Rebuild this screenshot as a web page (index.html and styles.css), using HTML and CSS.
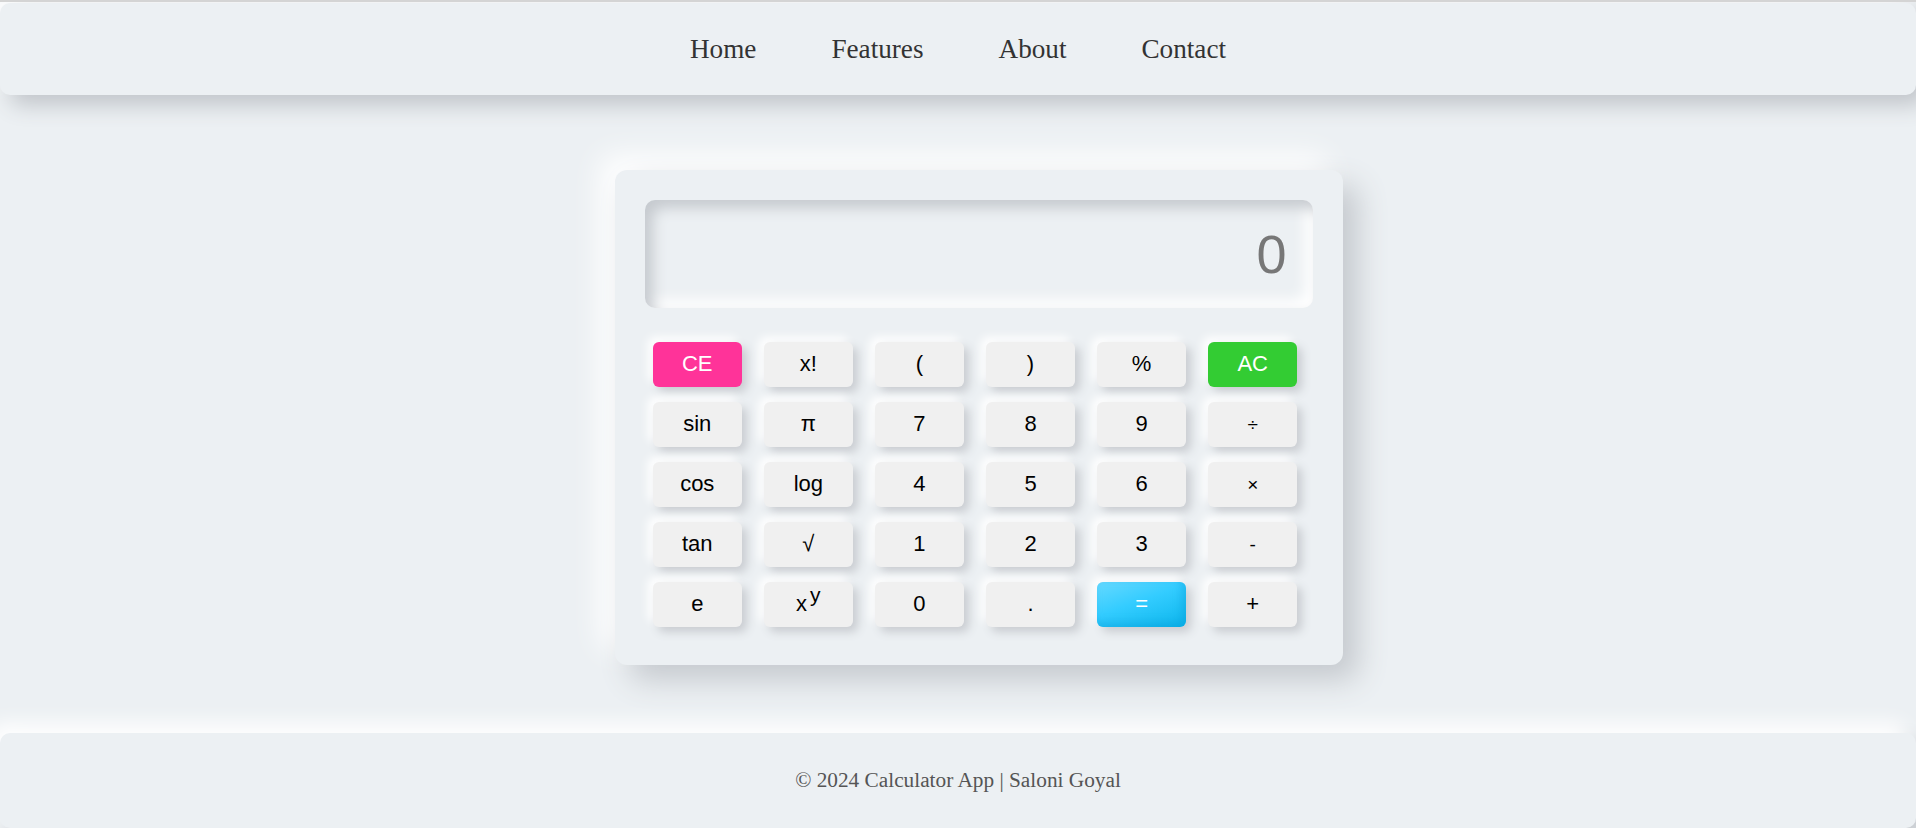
FILE: index.html
```html
<!DOCTYPE html>
<html lang="en">
<head>
<meta charset="utf-8">
<title>Calculator App</title>
<link rel="stylesheet" href="styles.css">
</head>
<body>
<header class="site-header">
  <nav class="nav">
    <a class="nav-link" href="#">Home</a>
    <a class="nav-link" href="#">Features</a>
    <a class="nav-link" href="#">About</a>
    <a class="nav-link" href="#">Contact</a>
  </nav>
</header>
<main class="main">
  <div class="calculator">
    <div class="display">0</div>
    <div class="keys">
      <button class="key key-ce">CE</button>
      <button class="key">x!</button>
      <button class="key">(</button>
      <button class="key">)</button>
      <button class="key">%</button>
      <button class="key key-ac">AC</button>

      <button class="key">sin</button>
      <button class="key">π</button>
      <button class="key">7</button>
      <button class="key">8</button>
      <button class="key">9</button>
      <button class="key key-op">÷</button>

      <button class="key">cos</button>
      <button class="key">log</button>
      <button class="key">4</button>
      <button class="key">5</button>
      <button class="key">6</button>
      <button class="key key-op">×</button>

      <button class="key">tan</button>
      <button class="key">√</button>
      <button class="key">1</button>
      <button class="key">2</button>
      <button class="key">3</button>
      <button class="key key-op">-</button>

      <button class="key">e</button>
      <button class="key">x<sup class="sup">y</sup></button>
      <button class="key">0</button>
      <button class="key">.</button>
      <button class="key key-eq">=</button>
      <button class="key">+</button>
    </div>
  </div>
</main>
<footer class="site-footer">
  <p class="footer-text">© 2024 Calculator App | Saloni Goyal</p>
</footer>
</body>
</html>
```

FILE: styles.css
```css
* {
  box-sizing: border-box;
}

html {
  background: #ecf0f3;
}

body {
  margin: 0;
  background: #ecf0f3;
  border-top: 2px solid #d4d4d4;
  padding-top: 1px;
  font-family: "Liberation Serif", "Times New Roman", serif;
  overflow: hidden;
}

.site-header {
  height: 92px;
  background: #ecf0f3;
  border-radius: 10px;
  box-shadow: 10px 10px 22px #c0c4c9, -10px -10px 20px #ffffff;
  display: flex;
  align-items: center;
  justify-content: center;
  position: relative;
  z-index: 2;
}

.nav {
  display: flex;
  gap: 75px;
}

.nav-link {
  font-size: 27.2px;
  color: #333;
  text-decoration: none;
}

.main {
  display: flex;
  justify-content: center;
  padding: 75px 0 68px 41px;
}

.calculator {
  width: 728px;
  padding: 30px 30px 38px 30px;
  background: #ecf0f3;
  border-radius: 12px;
  box-shadow: 15px 15px 30px #c5c9ce, -15px -15px 30px #ffffff;
}

.display {
  height: 108px;
  border-radius: 10px;
  background: #ecf0f3;
  box-shadow: inset 8px 8px 14px #c6cacf, inset -8px -8px 14px #ffffff;
  display: flex;
  align-items: center;
  justify-content: flex-end;
  padding-right: 26px;
  font-family: "Liberation Sans", Arial, sans-serif;
  font-size: 54px;
  color: #777;
  margin-bottom: 34px;
}

.keys {
  display: grid;
  grid-template-columns: repeat(6, 89.5px);
  column-gap: 21.6px;
  row-gap: 15.3px;
  margin-left: 8px;
}

.key {
  height: 44.7px;
  border: none;
  border-radius: 6px;
  background: #f0f0f0;
  box-shadow: 5px 5px 10px #c9ccd1, -5px -5px 10px #ffffff;
  font-family: "Liberation Sans", Arial, sans-serif;
  font-size: 22px;
  color: #000;
  display: flex;
  align-items: center;
  justify-content: center;
  padding: 0;
  line-height: 1;
}

.key-op {
  font-size: 19px;
}

.key-ce {
  background: #ff3399;
  color: #fff;
}

.key-ac {
  background: #33cc33;
  color: #fff;
}

.key-eq {
  background: linear-gradient(160deg, #66d9ff 0%, #33ccff 45%, #0cb6ec 100%);
  color: #fff;
  box-shadow: inset -4px -4px 8px rgba(0, 150, 210, 0.35), 5px 5px 10px #c9ccd1, -5px -5px 10px #ffffff;
}

.sup {
  font-size: 21px;
  position: relative;
  top: -10px;
  vertical-align: baseline;
  margin-left: 3px;
}

.site-footer {
  height: 95px;
  background: #ecf0f3;
  border-radius: 10px;
  box-shadow: -10px -10px 20px #ffffff, 10px 10px 20px #c3c7cc;
  display: flex;
  align-items: center;
  justify-content: center;
}

.footer-text {
  margin: 0;
  font-size: 21.3px;
  color: #555;
}
```
